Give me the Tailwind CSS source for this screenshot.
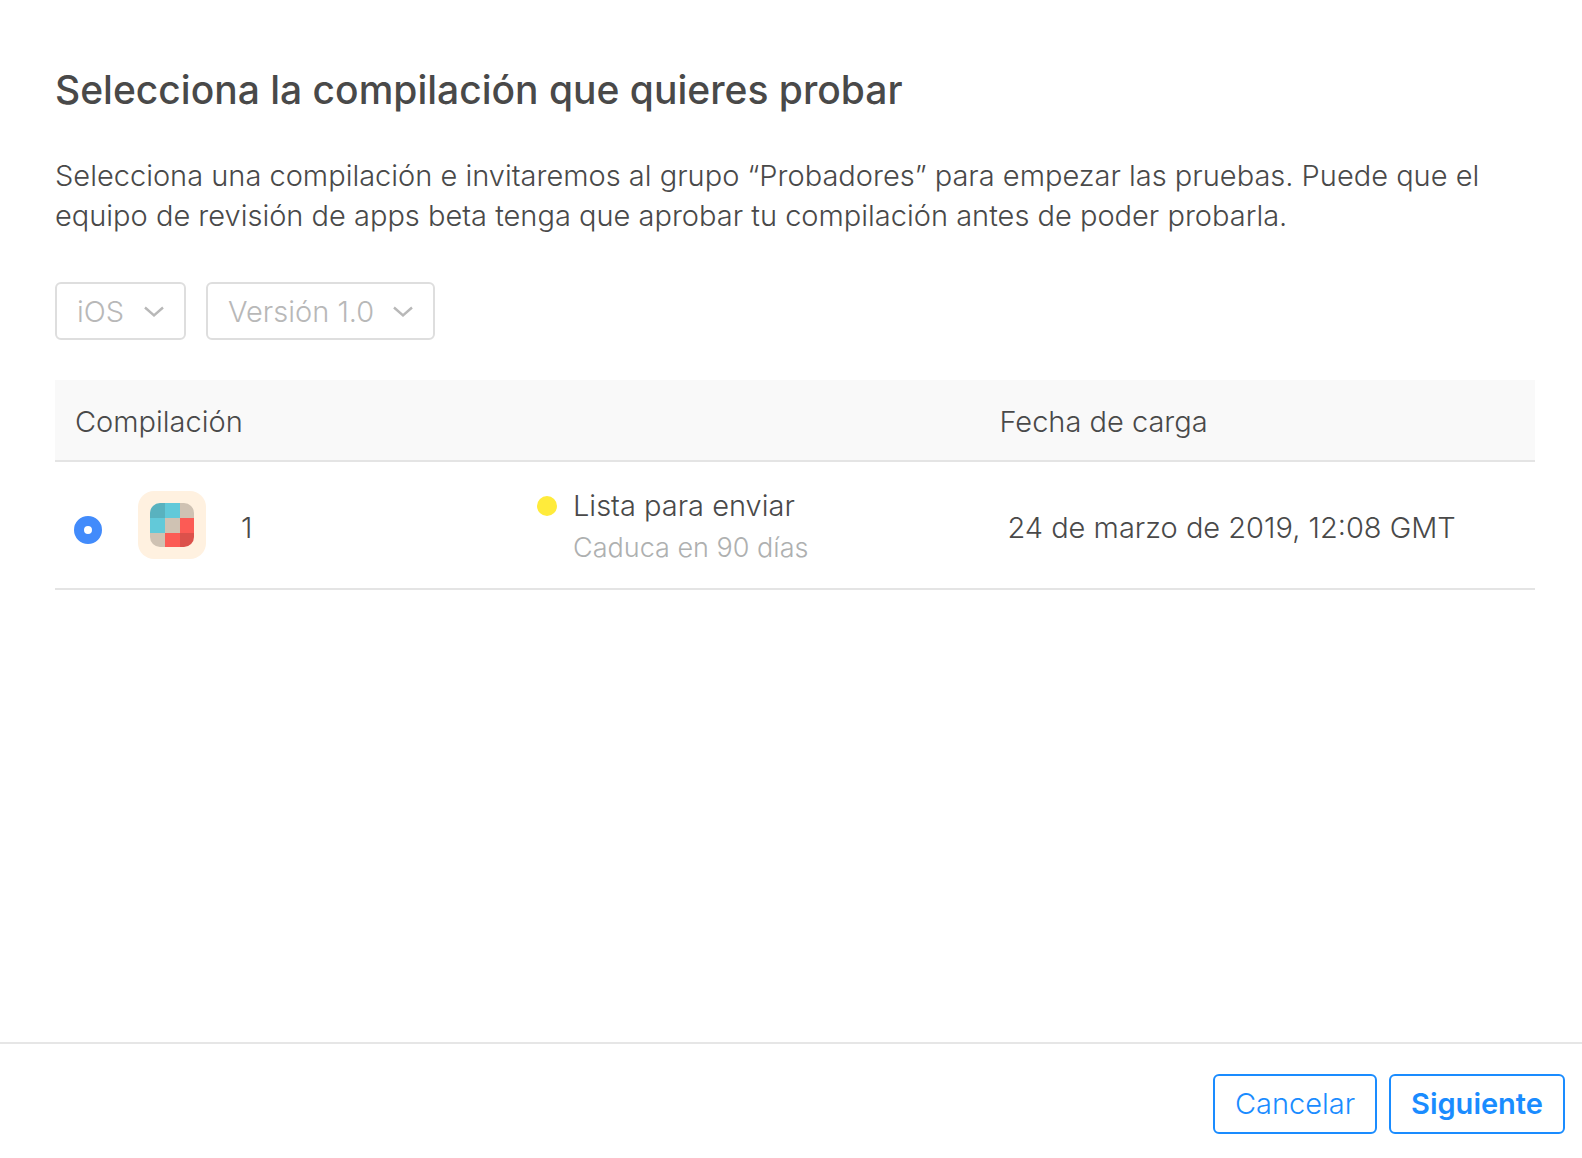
<!DOCTYPE html>
<html lang="es">
<head>
<meta charset="utf-8">
<meta name="viewport" content="width=device-width, initial-scale=1">
<title>Selecciona la compilación</title>
<script src="https://cdn.jsdelivr.net/npm/@tailwindcss/browser@4"></script>
</head>
<body class="flex min-h-screen flex-col bg-white font-['Inter',sans-serif] text-[29px] leading-10 font-light text-[#494949]">
  <main class="flex-1 pt-[66px] pr-[47px] pb-10 pl-[55px]">
    <h1 class="text-[39px] leading-12 font-medium">Selecciona la compilación que quieres probar</h1>
    <p class="mt-[42px]">Selecciona una compilación e invitaremos al grupo “Probadores” para empezar las pruebas. Puede que el equipo de revisión de apps beta tenga que aprobar tu compilación antes de poder probarla.</p>

    <form class="mt-[46px] flex gap-5 text-[#b8b8b8]">
      <div class="grid items-center">
        <select aria-label="Plataforma" disabled class="col-start-1 row-start-1 h-[58px] w-[131px] appearance-none rounded-md border-2 border-[#dedede] bg-white pt-px pl-5 opacity-100">
          <option>iOS</option>
        </select>
        <svg class="pointer-events-none col-start-1 row-start-1 mt-px mr-[21px] justify-self-end" width="22" height="12" viewBox="0 0 22 12" fill="none" stroke="#b8b8b8" stroke-width="2.4" aria-hidden="true"><path d="M2 1.5 11 9.5 20 1.5"/></svg>
      </div>
      <div class="grid items-center">
        <select aria-label="Versión" disabled class="col-start-1 row-start-1 h-[58px] w-[229px] appearance-none rounded-md border-2 border-[#dedede] bg-white pt-px pl-5 opacity-100">
          <option>Versión 1.0</option>
        </select>
        <svg class="pointer-events-none col-start-1 row-start-1 mt-px mr-[21px] justify-self-end" width="22" height="12" viewBox="0 0 22 12" fill="none" stroke="#b8b8b8" stroke-width="2.4" aria-hidden="true"><path d="M2 1.5 11 9.5 20 1.5"/></svg>
      </div>
    </form>

    <table class="mt-10 w-full table-fixed border-separate border-spacing-0 text-left">
      <colgroup>
        <col class="w-[82px]">
        <col class="w-[104px]">
        <col class="w-[20%]">
        <col>
        <col class="w-[37%]">
      </colgroup>
      <thead class="bg-[#f9f9f9]">
        <tr class="h-[82px]">
          <th colspan="4" scope="col" class="border-b-2 border-[#e4e4e4] pt-1 pl-5 font-light">Compilación</th>
          <th scope="col" class="border-b-2 border-[#e4e4e4] pt-1 pl-3 font-light">Fecha de carga</th>
        </tr>
      </thead>
      <tbody>
        <tr class="h-32">
          <td class="border-b-2 border-[#e4e4e4] pt-2 pl-[19px]">
            <input type="radio" name="build" id="build-1" checked aria-label="Compilación 1" class="mt-px block size-7 appearance-none rounded-full border-[10px] border-[#428bfb] bg-white">
          </td>
          <td class="border-b-2 border-[#e4e4e4]">
            <svg class="block" width="70" height="70" viewBox="0 0 70 70" role="img" aria-label="Icono de la app">
              <defs>
                <clipPath id="tiles"><rect x="13" y="13" width="44" height="44" rx="10"/></clipPath>
              </defs>
              <rect x="1" y="1" width="68" height="68" rx="16" fill="#fff1e0"/>
              <g clip-path="url(#tiles)">
                <path fill="#59b2bf" d="M13 13h15v15H13z"/>
                <path fill="#62c9d9" d="M28 13h15v15H28zM13 28h15v15H13z"/>
                <path fill="#cfc2b3" d="M43 13h14v15H43zM28 28h15v15H28zM13 43h15v14H13z"/>
                <path fill="#fc5b55" d="M43 28h14v15H43zM28 43h15v14H28z"/>
                <path fill="#dc514b" d="M43 43h14v14H43z"/>
              </g>
            </svg>
          </td>
          <td class="border-b-2 border-[#e4e4e4] pt-[6px]"><label for="build-1">1</label></td>
          <td class="border-b-2 border-[#e4e4e4] pt-1">
            <div class="flex gap-4">
              <span class="mt-[11px] size-5 shrink-0 rounded-full bg-[#ffeb3b]"></span>
              <div>
                <div class="leading-[42px]">Lista para enviar</div>
                <div class="text-[27px] leading-[42px] text-[#aeb0b0]">Caduca en 90 días</div>
              </div>
            </div>
          </td>
          <td class="border-b-2 border-[#e4e4e4] pt-[6px] pl-5">24 de marzo de 2019, 12:08 GMT</td>
        </tr>
      </tbody>
    </table>
  </main>

  <footer class="flex justify-end gap-3 border-t-2 border-[#e6e6e6] pt-[30px] pr-[17px] pb-6 text-[#1a8cff]">
    <button type="button" class="h-15 w-[164px] rounded-md border-2 border-[#1a8cff] bg-white">Cancelar</button>
    <button type="button" class="h-15 w-44 rounded-md border-2 border-[#1a8cff] bg-white font-semibold">Siguiente</button>
  </footer>
</body>
</html>
